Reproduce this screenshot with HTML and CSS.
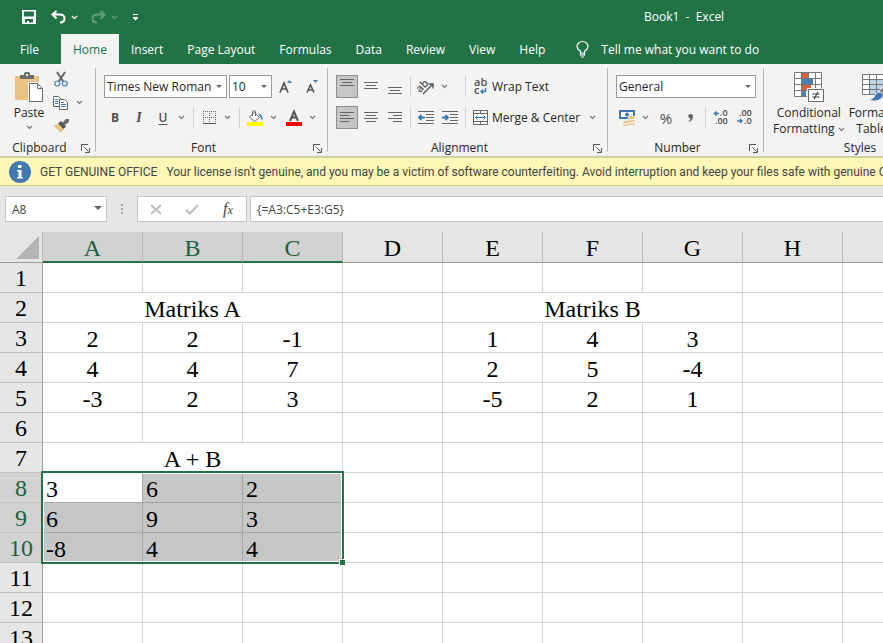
FILE: index.html
```html
<!DOCTYPE html>
<html lang="en">
<head>
    <meta charset="UTF-8">
    <meta name="viewport" content="width=device-width, initial-scale=1.0">
    <title>Book1 - Excel</title>

    <link rel="stylesheet" href="styles.css">
</head>
<body>
    <!-- Shared icons -->
    <svg class="sprite" aria-hidden="true">
        <symbol id="chevron" viewBox="0 0 7 5"><path d="M1 1l2.500 2.500L6 1" fill="none" stroke="currentColor" stroke-width="1.200"/></symbol>
        <symbol id="launcher" viewBox="0 0 9 9"><path d="M.5 7V.5H7M3.500 3.500l4 4M8.500 4v4.500H4" fill="none" stroke="#555"/></symbol>
    </svg>

    <header class="titlebar">
        <div class="quick">
            <button class="quick-btn" aria-label="Save">
                <svg width="14" height="14" viewBox="0 0 14 14"><path fill="#fff" fill-rule="evenodd" d="M0 0h14v14H1l-1-1zM2 1.500v5h10v-5zM3 9v3.500h2V11h2v1.500h4V9z"/></svg>
            </button>
            <button class="quick-btn" aria-label="Undo">
                <svg width="15" height="14" viewBox="0 0 15 14"><path d="M5.500 1L1.500 4.500l4 4M2 4.500h6.500c3 0 5 1.500 5 4s-2 4-4.500 4" fill="none" stroke="#fff" stroke-width="2"/></svg>
            </button>
            <button class="quick-arrow" aria-label="Undo list"><svg width="7" height="5"><use href="#chevron"/></svg></button>
            <button class="quick-btn faded" aria-label="Redo">
                <svg width="15" height="14" viewBox="0 0 15 14"><path d="M9.500 1l4 3.500-4 4M13 4.500H6.500c-3 0-5 1.500-5 4s2 4 4.500 4" fill="none" stroke="#fff" stroke-width="2"/></svg>
            </button>
            <button class="quick-arrow faded" aria-label="Redo list"><svg width="7" height="5"><use href="#chevron"/></svg></button>
            <button class="quick-btn customize" aria-label="Customize Quick Access Toolbar">
                <svg width="5" height="7" viewBox="0 0 5 7"><path d="M0 0h5v1H0zM0 3h5v1L2.500 6.500 0 4z" fill="#fff"/></svg>
            </button>
        </div>
        <div class="title">Book1&nbsp; -&nbsp; Excel</div>
    </header>

    <nav class="tabs">
        <button class="tab tab-file">File</button>
        <button class="tab active">Home</button>
        <button class="tab">Insert</button>
        <button class="tab">Page Layout</button>
        <button class="tab">Formulas</button>
        <button class="tab">Data</button>
        <button class="tab">Review</button>
        <button class="tab">View</button>
        <button class="tab">Help</button>
        <button class="tell-me">
            <svg width="13" height="17" viewBox="0 0 13 17"><path d="M4.500 12v-1.500C3 9 1 8 1 5.500a5.500 5 0 0 1 11 0C12 8 10 9 8.500 10.500V12zM4.500 12v2h4v-2M5 16h3" fill="none" stroke="#fff" stroke-width="1.200"/></svg>
            Tell me what you want to do
        </button>
    </nav>

    <section class="ribbon">
        <div class="group group-clipboard">
            <div class="group-body clipboard">
                <button class="big-btn paste">
                    <svg width="28" height="30" viewBox="0 0 28 30">
                        <path d="M0 4h24v24H0z" fill="#eac282"/>
                        <path d="M5 3h4V1.500L10 0h4l1 1.500V3h4v4H5z" fill="#6d6d6d"/>
                        <path d="M11 2h2v2h-2z" fill="#f3f3f3"/>
                        <path d="M13 10h10l6 6v15H13z" fill="#f3f3f3"/>
                        <path d="M14.500 11.500h8l5 5v13h-13zM22.500 11.500v5h5" fill="#fff" stroke="#6d6d6d"/>
                    </svg>
                    <span>Paste</span>
                    <svg class="chev" width="7" height="5"><use href="#chevron"/></svg>
                </button>
                <div class="clip-tools">
                    <button class="tool" aria-label="Cut">
                        <svg width="14" height="15" viewBox="0 0 14 15"><path d="M3 0l6.500 10M11 0L4.500 10" stroke="#666" stroke-width="2" fill="none"/><circle cx="3.200" cy="11.500" r="2.500" fill="none" stroke="#4a7fb5" stroke-width="1.200"/><circle cx="10.800" cy="11.500" r="2.500" fill="none" stroke="#4a7fb5" stroke-width="1.200"/></svg>
                    </button>
                    <div class="split">
                        <button class="tool" aria-label="Copy">
                            <svg width="16" height="14" viewBox="0 0 16 14"><path d="M.5.5h5l2 2v8h-7z" fill="#fff" stroke="#666"/><path d="M2 3.500h3M2 5.500h3M2 7.500h3" stroke="#4a7fb5"/><path d="M6.500 3.500h5l3 3v7h-8z" fill="#fff" stroke="#666"/><path d="M8 6.500h3M8 8.500h5M8 10.500h5" stroke="#4a7fb5"/></svg>
                        </button>
                        <button class="arrow" aria-label="Copy options"><svg width="7" height="5"><use href="#chevron"/></svg></button>
                    </div>
                    <button class="tool" aria-label="Format Painter">
                        <svg width="16" height="14" viewBox="0 0 16 14"><path d="M0 6l5-1 6 5-3 4z" fill="#eac282"/><path d="M5 4.500L8 2l5 5.500-2.500 2.500z" fill="#555"/><path d="M9 4l4-4h3v3l-4.500 3.500z" fill="#6d6d6d"/></svg>
                    </button>
                </div>
            </div>
            <div class="group-label">
                <span>Clipboard</span>
                <button class="launcher" aria-label="Clipboard settings"><svg width="9" height="9"><use href="#launcher"/></svg></button>
            </div>
        </div>

        <div class="group group-font">
            <div class="group-body">
                <div class="row">
                    <span class="combo combo-font"><select aria-label="Font"><option>Times New Roman</option></select></span>
                    <span class="combo combo-size"><select aria-label="Font size"><option>10</option></select></span>
                    <button class="tool size-btn" aria-label="Increase font size">
                        <svg width="14" height="15" viewBox="0 0 14 15"><path d="M1 13.500L5 4l4 9.500M2.500 10h5" fill="none" stroke="#555" stroke-width="1.700"/><path d="M8 4L10.500 1 13 4z" fill="#4a7fb5"/></svg>
                    </button>
                    <button class="tool size-btn" aria-label="Decrease font size">
                        <svg width="14" height="15" viewBox="0 0 14 15"><path d="M2 13.500L5.500 6 9 13.500M3.500 11h4" fill="none" stroke="#555" stroke-width="1.600"/><path d="M8 1h5l-2.500 3z" fill="#4a7fb5"/></svg>
                    </button>
                </div>
                <div class="row">
                    <button class="tool bold">B</button>
                    <button class="tool italic">I</button>
                    <div class="split">
                        <button class="tool underline">U</button>
                        <button class="arrow" aria-label="Underline style"><svg width="7" height="5"><use href="#chevron"/></svg></button>
                    </div>
                    <span class="sep"></span>
                    <div class="split">
                        <button class="tool" aria-label="Borders">
                            <svg width="13" height="13" viewBox="0 0 13 13"><path d="M0 .5h13M0 6.500h13M.5 0v12M6.500 0v12M12.500 0v12" stroke="#666" stroke-dasharray="1 1"/><path d="M0 12.500h13" stroke="#555"/></svg>
                        </button>
                        <button class="arrow" aria-label="Border styles"><svg width="7" height="5"><use href="#chevron"/></svg></button>
                    </div>
                    <span class="sep"></span>
                    <div class="split">
                        <button class="tool" aria-label="Fill color">
                            <svg width="16" height="16" viewBox="0 0 16 16"><path d="M2.500 7l5-4.500 5 5-5 4z" fill="#fff" stroke="#666"/><path d="M5.500 6V1.500q1.500-2 3 0V6" fill="none" stroke="#666"/><path d="M11 3.500q5 0 4.500 7-2-.5-2-3.500z" fill="#4a7fb5"/><path d="M0 12h16v4H0z" fill="#ff0"/></svg>
                        </button>
                        <button class="arrow" aria-label="Fill colors"><svg width="7" height="5"><use href="#chevron"/></svg></button>
                    </div>
                    <div class="split">
                        <button class="tool" aria-label="Font color">
                            <svg width="16" height="16" viewBox="0 0 16 16"><path d="M4 11L8 1.500 12 11M5.500 7.500h5" fill="none" stroke="#555" stroke-width="2"/><path d="M0 12h16v4H0z" fill="#f00"/></svg>
                        </button>
                        <button class="arrow" aria-label="Font colors"><svg width="7" height="5"><use href="#chevron"/></svg></button>
                    </div>
                </div>
            </div>
            <div class="group-label">
                <span>Font</span>
                <button class="launcher" aria-label="Font settings"><svg width="9" height="9"><use href="#launcher"/></svg></button>
            </div>
        </div>

        <div class="group group-align">
            <div class="group-body">
                <div class="row">
                    <button class="tool pressed" aria-label="Top align"><svg width="14" height="17" viewBox="0 0 14 17"><path d="M0 1.500h14M2 4.500h10M0 7.500h14" stroke="#666"/></svg></button>
                    <button class="tool" aria-label="Middle align"><svg width="14" height="17" viewBox="0 0 14 17"><path d="M0 4.500h14M2 7.500h10M0 10.500h14" stroke="#666"/></svg></button>
                    <button class="tool" aria-label="Bottom align"><svg width="14" height="17" viewBox="0 0 14 17"><path d="M0 9.500h14M2 12.500h10M0 15.500h14" stroke="#666"/></svg></button>
                    <span class="sep"></span>
                    <div class="split orientation">
                        <button class="tool" aria-label="Orientation">
                            <svg width="18" height="16" viewBox="0 0 18 16"><text x="-1" y="11" transform="rotate(-45 5 8)" class="icon-text">ab</text><path d="M6 15L15.500 5.500M11.500 5H16V9.500" fill="none" stroke="#555" stroke-width="1.400"/></svg>
                        </button>
                        <button class="arrow" aria-label="Orientation options"><svg width="7" height="5"><use href="#chevron"/></svg></button>
                    </div>
                    <span class="sep"></span>
                    <button class="text-tool">
                        <svg width="16" height="17" viewBox="0 0 16 17"><text x="1" y="8" class="icon-text">ab</text><text x="1" y="16" class="icon-text">c</text><path d="M12.500 10v3.500H8M10 11.500l-2 2 2 2" fill="none" stroke="#3d78b5" stroke-width="1.400"/></svg>
                        Wrap Text
                    </button>
                </div>
                <div class="row">
                    <button class="tool pressed" aria-label="Align left"><svg width="14" height="13" viewBox="0 0 14 13"><path d="M0 1.500h14M0 4.500h9M0 7.500h14M0 10.500h9" stroke="#666"/></svg></button>
                    <button class="tool" aria-label="Center"><svg width="14" height="13" viewBox="0 0 14 13"><path d="M0 1.500h14M2 4.500h10M0 7.500h14M2 10.500h10" stroke="#666"/></svg></button>
                    <button class="tool" aria-label="Align right"><svg width="14" height="13" viewBox="0 0 14 13"><path d="M0 1.500h14M5 4.500h9M0 7.500h14M5 10.500h9" stroke="#666"/></svg></button>
                    <span class="sep"></span>
                    <button class="tool" aria-label="Decrease indent"><svg width="16" height="13" viewBox="0 0 16 13"><path d="M0 .5h16M8 3.500h8M8 6.500h8M8 9.500h8M0 12.500h16" stroke="#666"/><path d="M7 6.500H1M3.500 4L1 6.500 3.500 9" fill="none" stroke="#3d78b5" stroke-width="1.800"/></svg></button>
                    <button class="tool" aria-label="Increase indent"><svg width="16" height="13" viewBox="0 0 16 13"><path d="M0 .5h16M8 3.500h8M8 6.500h8M8 9.500h8M0 12.500h16" stroke="#666"/><path d="M0 6.500h6M3.500 4L6 6.500 3.500 9" fill="none" stroke="#3d78b5" stroke-width="1.800"/></svg></button>
                    <span class="sep"></span>
                    <button class="text-tool">
                        <svg width="16" height="15" viewBox="0 0 16 15"><path d="M.5.5h14v14H.5zM.5 3.500h14M.5 11.500h14M7.500.5v3M7.500 11.500v3" fill="#fff" stroke="#666"/><path d="M2.500 7.500h10M4.500 5.500l-2 2 2 2M10.500 5.500l2 2-2 2" fill="none" stroke="#3d78b5"/></svg>
                        Merge &amp; Center
                    </button>
                    <button class="arrow" aria-label="Merge options"><svg width="7" height="5"><use href="#chevron"/></svg></button>
                </div>
            </div>
            <div class="group-label">
                <span>Alignment</span>
                <button class="launcher" aria-label="Alignment settings"><svg width="9" height="9"><use href="#launcher"/></svg></button>
            </div>
        </div>

        <div class="group group-number">
            <div class="group-body">
                <div class="row">
                    <span class="combo combo-number"><select aria-label="Number format"><option>General</option></select></span>
                </div>
                <div class="row">
                    <div class="split">
                        <button class="tool" aria-label="Accounting format">
                            <svg width="16" height="16" viewBox="0 0 16 16"><path d="M1 1h14v7H1z" fill="#fff" stroke="#3d78b5" stroke-width="2"/><circle cx="8" cy="4.500" r="2" fill="#3d78b5"/><path d="M9 6h8v11H3v-6h6z" fill="#f3f3f3"/><g fill="#eac282"><ellipse cx="12.500" cy="7.500" rx="3.500" ry="1.500"/><path d="M9 9.500q3.500 2 7 0v1.500q-3.500 2-7 0zM10 12.500q3 2 6 0V14q-3 2-6 0z"/><ellipse cx="7" cy="12" rx="3" ry="1.200"/><path d="M4 14q3 1.500 6 0v1.200q-3 1.500-6 0z"/></g></svg>
                        </button>
                        <button class="arrow" aria-label="Accounting formats"><svg width="7" height="5"><use href="#chevron"/></svg></button>
                    </div>
                    <button class="tool percent">%</button>
                    <button class="tool" aria-label="Comma style"><svg width="5" height="8" viewBox="0 0 5 8"><path d="M2.300 0A2.200 2.200 0 0 1 5 2.500Q5 6 1 8L.5 7.200Q2.500 6 2.500 4.500A2.200 2.200 0 0 1 2.300 0z" fill="#666"/></svg></button>
                    <span class="sep"></span>
                    <button class="tool" aria-label="Increase decimal"><svg width="16" height="15" viewBox="0 0 16 15"><text x="7" y="6" class="decimal">.0</text><text x="2" y="14" class="decimal">.00</text><path d="M6 3.500H1.500M3.500 1.500l-2 2 2 2" fill="none" stroke="#3d78b5" stroke-width="1.500"/></svg></button>
                    <button class="tool" aria-label="Decrease decimal"><svg width="16" height="15" viewBox="0 0 16 15"><text x="2" y="6" class="decimal">.00</text><text x="7" y="14" class="decimal">.0</text><path d="M0 11h5M3 9l2 2-2 2" fill="none" stroke="#3d78b5" stroke-width="1.500"/></svg></button>
                </div>
            </div>
            <div class="group-label">
                <span>Number</span>
                <button class="launcher" aria-label="Number settings"><svg width="9" height="9"><use href="#launcher"/></svg></button>
            </div>
        </div>

        <div class="group group-styles">
            <div class="group-body styles-body">
                <button class="big-btn">
                    <svg width="30" height="30" viewBox="0 0 30 30">
                        <path d="M.5.500h27v24H.5zM7.500.500v24M21.500.500v24M14.500.500v24M.5 6.500h27M.5 12.500h27M.5 18.500h27" fill="#fff" stroke="#777"/>
                        <path d="M8 1h6v5H8zM8 13h9v5H8z" fill="#d65f3d"/><path d="M8 7h11v5H8zM8 19h4v5H8z" fill="#4a7fb5"/>
                        <path d="M13 16h17v14H13z" fill="#f3f3f3"/><path d="M14.500 17.500h15v12h-15z" fill="#fff" stroke="#666"/>
                        <path d="M18.500 22h7M18.500 25h7M24 19.500l-4 8" stroke="#333" fill="none"/>
                    </svg>
                    <span>Conditional</span>
                    <span>Formatting <svg width="7" height="5"><use href="#chevron"/></svg></span>
                </button>
                <button class="big-btn">
                    <svg width="30" height="30" viewBox="0 0 30 30">
                        <path d="M.5 2.500h28v20H.5z" fill="#fff"/><path d="M7 8h21v14H7z" fill="#bdd3ea"/>
                        <path d="M.5 2.500h28v20H.5zM7.500 2.500v20M14.500 2.500v20M21.500 2.500v20M.5 7.500h28M.5 12.500h28M.5 17.500h28" fill="none" stroke="#777"/>
                        <path d="M17 19L29 8v8l-8 8z" fill="#777" stroke="#f3f3f3"/><path d="M6 28q6-1 7-5 2-4 6-3 4 3 1 6-5 5-14 2z" fill="#3d78b5" stroke="#f3f3f3"/>
                    </svg>
                    <span>Format as</span>
                    <span>Table <svg width="7" height="5"><use href="#chevron"/></svg></span>
                </button>
            </div>
            <div class="group-label"><span>Styles</span></div>
        </div>
    </section>

    <div class="message">
        <svg width="22" height="22" viewBox="0 0 22 22"><circle cx="11" cy="11" r="11" fill="#4279b3"/><path d="M9 4h3.500v3H9zM8 9h4.500v7H14v1.500H8V16h1.500v-5.500H8z" fill="#fff"/></svg>
        <strong>GET GENUINE OFFICE</strong>
        <span>Your license isn't genuine, and you may be a victim of software counterfeiting. Avoid interruption and keep your files safe with genuine Office today.</span>
    </div>

    <div class="formula-bar">
        <div class="name-box">
            <input type="text" value="A8" aria-label="Name box">
        </div>
        <svg class="dots" width="2" height="10" viewBox="0 0 2 10"><path d="M0 0h2v2H0zM0 4h2v2H0zM0 8h2v2H0z" fill="#a6a6a6"/></svg>
        <div class="formula-tools">
            <button aria-label="Cancel"><svg width="12" height="11" viewBox="0 0 12 11"><path d="M1 1l10 9M11 1L1 10" stroke="#bdbdbd" stroke-width="1.800"/></svg></button>
            <button aria-label="Enter"><svg width="14" height="11" viewBox="0 0 14 11"><path d="M1 6l4 3.500L13 1" fill="none" stroke="#bdbdbd" stroke-width="2.200"/></svg></button>
            <button class="fx" aria-label="Insert function">f<small>x</small></button>
        </div>
        <input class="formula" type="text" value="{=A3:C5+E3:G5}" aria-label="Formula">
    </div>

    <main class="sheet">
        <table>
            <colgroup>
                <col class="col-head">
                <col><col><col><col><col><col><col><col><col>
            </colgroup>
            <thead>
                <tr>
                    <th class="corner"><svg width="24" height="24" viewBox="0 0 24 24"><path d="M24 0v23H1z" fill="#b4b4b4"/></svg></th>
                    <th class="on">A</th><th class="on">B</th><th class="on">C</th><th>D</th><th>E</th><th>F</th><th>G</th><th>H</th><th>I</th>
                </tr>
            </thead>
            <tbody>
                <tr><th>1</th><td></td><td></td><td></td><td></td><td></td><td></td><td></td><td></td><td></td></tr>
                <tr><th>2</th><td colspan="3">Matriks A</td><td></td><td colspan="3">Matriks B</td><td></td><td></td></tr>
                <tr><th>3</th><td>2</td><td>2</td><td>-1</td><td></td><td>1</td><td>4</td><td>3</td><td></td><td></td></tr>
                <tr><th>4</th><td>4</td><td>4</td><td>7</td><td></td><td>2</td><td>5</td><td>-4</td><td></td><td></td></tr>
                <tr><th>5</th><td>-3</td><td>2</td><td>3</td><td></td><td>-5</td><td>2</td><td>1</td><td></td><td></td></tr>
                <tr><th>6</th><td></td><td></td><td></td><td></td><td></td><td></td><td></td><td></td><td></td></tr>
                <tr><th>7</th><td colspan="3">A + B</td><td></td><td></td><td></td><td></td><td></td><td></td></tr>
                <tr><th class="on">8</th><td class="picked current">3<span class="selection"><span class="handle"></span></span></td><td class="picked">6</td><td class="picked">2</td><td></td><td></td><td></td><td></td><td></td><td></td></tr>
                <tr><th class="on">9</th><td class="picked">6</td><td class="picked">9</td><td class="picked">3</td><td></td><td></td><td></td><td></td><td></td><td></td></tr>
                <tr><th class="on">10</th><td class="picked">-8</td><td class="picked">4</td><td class="picked">4</td><td></td><td></td><td></td><td></td><td></td><td></td></tr>
                <tr><th>11</th><td></td><td></td><td></td><td></td><td></td><td></td><td></td><td></td><td></td></tr>
                <tr><th>12</th><td></td><td></td><td></td><td></td><td></td><td></td><td></td><td></td><td></td></tr>
                <tr><th>13</th><td></td><td></td><td></td><td></td><td></td><td></td><td></td><td></td><td></td></tr>
            </tbody>
        </table>
    </main>
</body>
</html>
```
FILE: styles.css
```css
* {
    box-sizing: border-box;
}

body {
    font-family: "Open Sans", "Noto Sans", sans-serif;
    font-size: 12px;
    margin: 0;
    color: #262626;
    background-color: #e6e6e6;
    display: flex;
    flex-direction: column;
    height: 100vh;
    overflow: hidden;
}

button, select, input {
    font: inherit;
    color: inherit;
    margin: 0;
    padding: 0;
    border: none;
    border-radius: 0;
    background: none;
}

button {
    display: flex;
    align-items: center;
    justify-content: center;
    white-space: nowrap;
}

svg {
    flex: none;
    overflow: visible;
}

.sprite {
    display: none;
}

/* Title bar and tabs */
.titlebar {
    display: flex;
    align-items: center;
    flex: none;
    height: 34px;
    background-color: #217346;
    color: #fff;
}

.title {
    padding-bottom: 2px;
}

.quick {
    display: flex;
    align-items: center;
    width: 644px;
    padding-left: 18px;
}

.quick-btn {
    width: 22px;
    height: 22px;
    margin-right: 7px;
}

.quick-arrow {
    width: 10px;
    height: 22px;
    margin: 0 8px 0 -7px;
}

.quick-btn.customize {
    margin-left: -3px;
}

.faded {
    opacity: 0.3;
}

.tabs {
    display: flex;
    flex: none;
    height: 30px;
    padding-left: 8px;
    background-color: #217346;
}

.tab {
    padding: 0 12px;
    color: #fff;
}

.tab-file {
    margin-right: 10px;
}

.tab.active {
    background-color: #f3f3f3;
    color: #217346;
}

.tell-me {
    gap: 12px;
    margin-left: 19px;
    color: #fff;
}

/* Ribbon */
.ribbon {
    display: flex;
    flex: none;
    padding: 4px 0;
    overflow: hidden;
    background-color: #f3f3f3;
    border-bottom: 1px solid #c8c8c8;
}

.group {
    display: flex;
    flex-direction: column;
    flex: none;
    border-right: 1px solid #b5b5b5;
}

.group-clipboard {
    width: 96px;
}

.group-font {
    width: 232px;
}

.group-align {
    width: 280px;
}

.group-number {
    width: 156px;
}

.group-styles {
    width: 193px;
}

.group-body {
    display: flex;
    flex-direction: column;
    gap: 8px;
    height: 70px;
    padding: 7px 0 0 8px;
}

.group-label {
    display: flex;
    height: 14px;
    line-height: 20px;
}

.group-label span {
    flex: 1;
    text-align: center;
}

.launcher {
    width: 16px;
    height: 20px;
    padding-right: 4px;
}

.row {
    display: flex;
    align-items: center;
    gap: 2px;
    height: 23px;
}

.split {
    display: flex;
}

.tool {
    width: 22px;
    height: 23px;
    color: #505050;
}

.size-btn {
    width: 24px;
}

.arrow {
    width: 15px;
    height: 23px;
    color: #777;
}

.orientation {
    width: 46px;
}

.text-tool {
    gap: 3px;
    height: 23px;
    padding: 0 3px;
}

.pressed {
    background-color: #c6c6c6;
    border: 1px solid #8f8f8f;
}

.bold {
    font-weight: bold;
}

.italic {
    font-family: "Liberation Serif", serif;
    font-size: 14px;
    font-style: italic;
    font-weight: bold;
}

.underline {
    font-weight: 600;
    text-decoration: underline;
    text-underline-offset: 2px;
}

.percent {
    font-size: 15px;
}

.sep {
    width: 1px;
    height: 21px;
    margin: 0 2px;
    background-color: #d0d0d0;
}

.icon-text {
    font-size: 11px;
    font-weight: 600;
    fill: #555;
}

.decimal {
    font-size: 9px;
    font-weight: 600;
    fill: #444;
}

.combo {
    position: relative;
}

.combo select {
    appearance: none;
    display: block;
    width: 100%;
    height: 23px;
    padding-left: 2px;
    background-color: #fff;
    border: 1px solid #9a9a9a;
}

.combo::after,
.name-box::after {
    content: "";
    position: absolute;
    top: 10px;
    right: 5px;
    border: 3px solid transparent;
    border-top-color: #666;
    border-bottom: none;
}

.combo-font {
    width: 123px;
}

.combo-size {
    width: 43px;
}

.combo-number {
    width: 140px;
}

/* Large ribbon buttons */
.clipboard {
    flex-direction: row;
    gap: 0;
    padding: 0;
}

.big-btn {
    flex-direction: column;
    justify-content: flex-start;
    padding-top: 4px;
    line-height: 16px;
}

.big-btn > svg:first-child {
    margin-bottom: 3px;
}

.big-btn span svg {
    vertical-align: middle;
    color: #777;
}

.paste {
    width: 50px;
    padding-left: 8px;
}

.chev {
    margin-top: 4px;
    color: #777;
}

.styles-body {
    flex-direction: row;
    gap: 4px;
    padding: 0 0 0 9px;
}

/* Message bar */
.message {
    display: flex;
    align-items: center;
    gap: 9px;
    flex: none;
    height: 29px;
    padding-left: 9px;
    overflow: hidden;
    font-family: Roboto, "Open Sans", sans-serif;
    background-color: #fcf7b6;
    border: solid #d8d47f;
    border-width: 1px 0;
    color: #444;
    white-space: nowrap;
}

.message strong {
    font-weight: normal;
}

/* Formula bar */
.formula-bar {
    display: flex;
    align-items: center;
    flex: none;
    padding: 10px 0 10px 5px;
    color: #444;
}

.name-box {
    position: relative;
    width: 102px;
}

.name-box input {
    width: 100%;
    height: 26px;
    padding-left: 6px;
    background-color: #fff;
    border: 1px solid #c6c6c6;
}

.name-box::after {
    border-width: 4px 4px 0;
}

.dots {
    margin: 0 14px;
}

.formula-tools {
    display: flex;
    justify-content: space-around;
    width: 110px;
    height: 26px;
    background-color: #fff;
    border: 1px solid #c6c6c6;
}

.formula-tools button {
    width: 30px;
}

.fx {
    font-family: "Liberation Serif", serif;
    font-size: 16px;
    font-style: italic;
    color: #444;
}

.fx small {
    font-size: 12px;
    padding-top: 3px;
}

.formula {
    flex: 1;
    height: 26px;
    margin-left: 3px;
    padding-left: 6px;
    background-color: #fff;
    border: 1px solid #c6c6c6;
    border-right: none;
}

/* Sheet */
.sheet {
    flex: 1;
    overflow: hidden;
    font-family: "Liberation Serif", serif;
    font-size: 24px;
    color: #000;
}

table {
    width: 943px;
    table-layout: fixed;
    border-spacing: 0;
    background-color: #fff;
}

.col-head {
    width: 43px;
}

th {
    height: 30px;
    padding: 2px 0 0;
    font-weight: normal;
    line-height: 27px;
    background-color: #e6e6e6;
    border-right: 1px solid #9b9b9b;
    border-bottom: 1px solid #c0c0c0;
}

thead th {
    height: 31px;
    line-height: 28px;
    border-right-color: #b9b9b9;
    border-bottom-color: #9b9b9b;
}

.on {
    background-color: #d2d2d2;
    color: #1e6040;
}

thead .on {
    padding-top: 3px;
    line-height: 26px;
    border-bottom: 2px solid #217346;
}

.corner svg {
    display: block;
    margin-left: 15px;
}

td {
    position: relative;
    height: 30px;
    padding: 3px 0 0;
    line-height: 26px;
    text-align: center;
    border-right: 1px solid #d4d4d4;
    border-bottom: 1px solid #d4d4d4;
}

.picked {
    padding-left: 3px;
    text-align: left;
    background-color: #c6c6c6;
    border-color: #a5a5a5;
}

.current {
    background-color: #fff;
}

/* Frame round the selected range, three cells each way */
.selection {
    position: absolute;
    top: -2px;
    left: -2px;
    z-index: 1;
    width: calc(300% + 6px);
    height: calc(300% + 6px);
    border: 2px solid #217346;
    box-shadow: inset 0 0 0 1px #fff;
}

.handle {
    position: absolute;
    right: -4px;
    bottom: -4px;
    width: 7px;
    height: 7px;
    background-color: #217346;
    border: 1px solid #fff;
}
```
